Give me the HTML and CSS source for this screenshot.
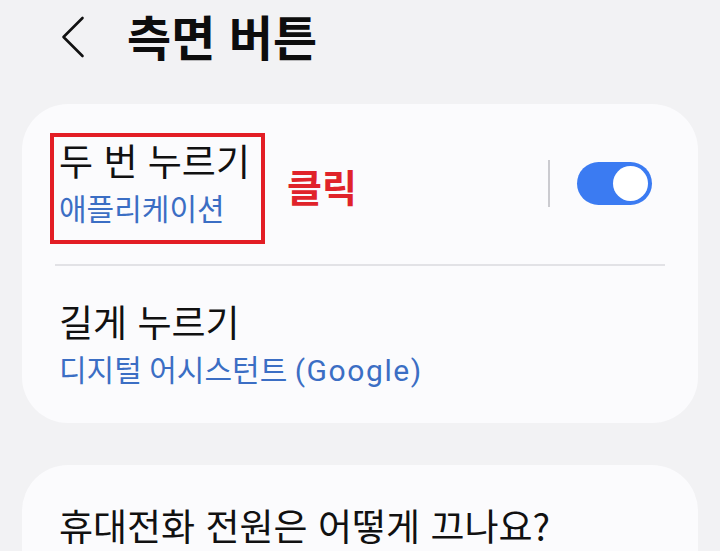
FILE: index.html
```html
<!DOCTYPE html>
<html lang="ko">
<head>
<meta charset="utf-8">
<title>측면 버튼</title>
<link rel="stylesheet" href="styles.css">
</head>
<body>
<div class="screen">
  <header class="topbar">
    <span class="back" aria-label="뒤로">
      <svg width="24" height="42" viewBox="0 0 24 42"><polyline points="21.5,2 2.5,21 21.5,40" fill="none" stroke="#111" stroke-width="2.6" stroke-linecap="round" stroke-linejoin="round"/></svg>
    </span>
    <h1 class="page-title">측면 버튼</h1>
  </header>

  <section class="card">
    <div class="row row-first">
      <div class="texts">
        <div class="item-title">두 번 누르기</div>
        <div class="item-sub">애플리케이션</div>
      </div>
      <div class="controls">
        <span class="vdiv"></span>
        <span class="switch"><span class="knob"></span></span>
      </div>
    </div>
    <div class="sep"></div>
    <div class="row row-second">
      <div class="texts">
        <div class="item-title">길게 누르기</div>
        <div class="item-sub">디지털 어시스턴트 <span class="latin">(Google)</span></div>
      </div>
    </div>
    <div class="annot-box"></div>
    <div class="annot-label">클릭</div>
  </section>

  <section class="card card-help">
    <div class="help-title">휴대전화 전원은 어떻게 끄나요?</div>
  </section>
</div>
</body>
</html>
```
FILE: styles.css
```css
html, body {
  margin: 0;
  padding: 0;
}
body {
  width: 720px;
  height: 551px;
  overflow: hidden;
  background: #f2f2f4;
  font-family: "Roboto", "Noto Sans CJK KR", sans-serif;
  color: #111;
}
.screen {
  padding: 0 22px;
}
.topbar {
  height: 104px;
  display: flex;
  align-items: flex-start;
}
.back {
  display: block;
  margin-left: 39px;
  margin-top: 16px;
  width: 24px;
  height: 42px;
}
.back svg {
  display: block;
}
.page-title {
  margin: 0 0 0 42px;
  font-family: "Noto Sans CJK KR", sans-serif;
  font-size: 48px;
  font-weight: 700;
  line-height: 70px;
  white-space: nowrap;
  color: #0d0d0d;
}
.card {
  position: relative;
  background: #fbfbfd;
  border-radius: 46px;
}
.row {
  display: flex;
  align-items: center;
  padding-left: 37px;
  padding-right: 46px;
}
.row-first {
  padding-top: 32px;
  padding-bottom: 36px;
}
.row-second {
  padding-top: 31px;
  padding-bottom: 34px;
}
.texts {
  flex: 1;
}
.item-title {
  font-family: "Noto Sans CJK KR", sans-serif;
  font-size: 37px;
  line-height: 48px;
  color: #111;
}
.item-sub {
  margin-top: 8px;
  font-size: 30px;
  line-height: 36px;
  color: #3b6ec4;
}
.latin {
  letter-spacing: 1.6px;
}
.controls {
  display: flex;
  align-items: center;
  gap: 27px;
  margin-top: 3px;
}
.vdiv {
  width: 2px;
  height: 47px;
  background: #cbcbd0;
}
.switch {
  box-sizing: border-box;
  width: 75px;
  height: 43px;
  padding: 4px;
  border-radius: 22px;
  background: #3b7bf2;
  display: flex;
  justify-content: flex-end;
}
.knob {
  width: 35px;
  height: 35px;
  border-radius: 50%;
  background: #ffffff;
}
.sep {
  height: 2px;
  margin: 0 33px;
  background: #e2e2e6;
}
.annot-box {
  position: absolute;
  left: 28px;
  top: 29px;
  width: 215px;
  height: 111px;
  box-sizing: border-box;
  border: 4px solid #e31e25;
}
.annot-label {
  position: absolute;
  left: 265px;
  top: 63px;
  font-family: "Noto Sans CJK KR", sans-serif;
  font-size: 38px;
  font-weight: 700;
  line-height: 38px;
  color: #e0232a;
}
.card-help {
  margin-top: 42px;
  height: 86px;
  box-sizing: border-box;
  border-radius: 46px 46px 0 0;
  padding: 36px 37px 0;
}
.help-title {
  font-family: "Noto Sans CJK KR", sans-serif;
  font-size: 37px;
  line-height: 48px;
  color: #111;
}
```
